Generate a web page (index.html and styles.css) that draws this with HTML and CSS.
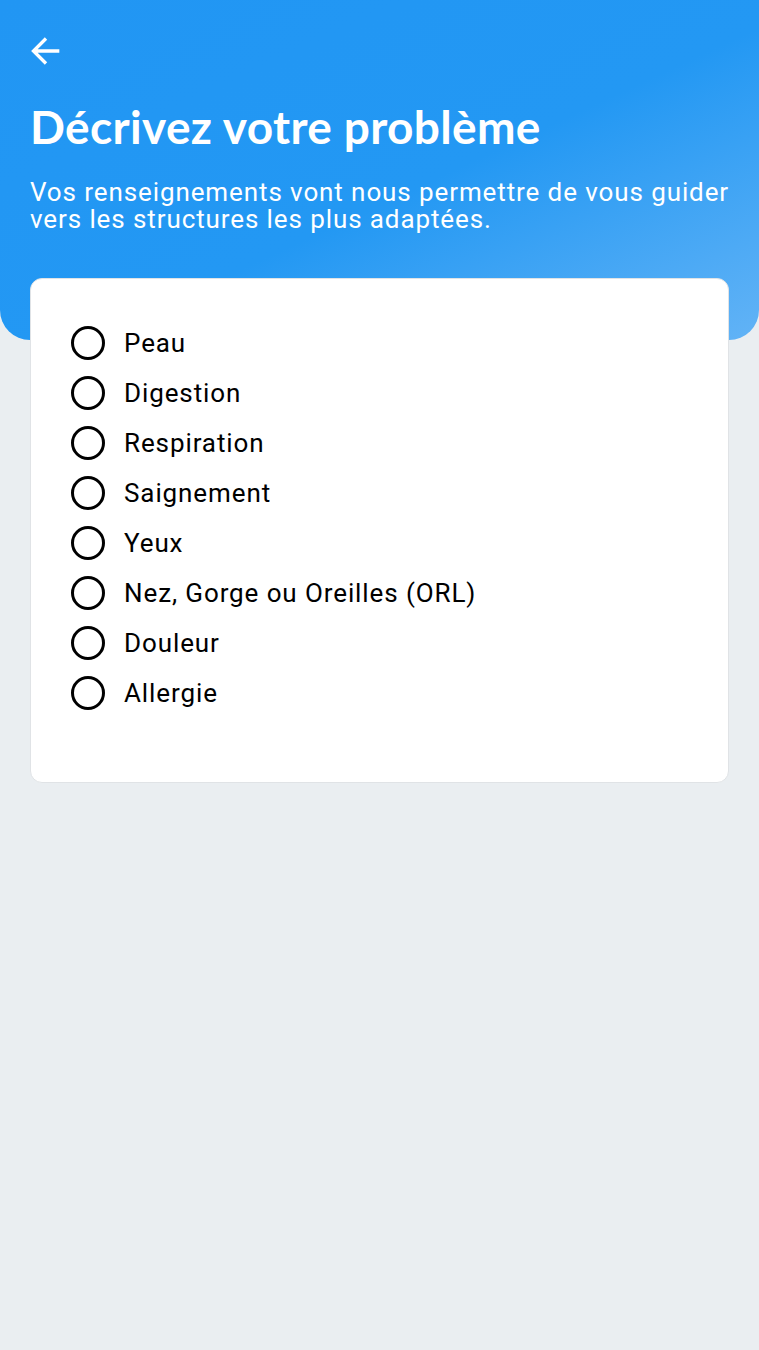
FILE: index.html
```html
<!DOCTYPE html>
<html lang="fr">
  <head>
    <meta charset="UTF-8" />
    <meta name="viewport" content="width=device-width, initial-scale=1.0" />
    <title>Décrivez votre problème</title>
    <link rel="stylesheet" href="styles.css">
  </head>
  <body>
    <div class="header">
      <a href="#" class="back">
        <svg width="40" height="40" viewBox="0 0 24 24">
          <path d="M20 12H4.5M12 4.5L4.5 12l7.5 7.5" fill="none" stroke="white" stroke-width="2" />
        </svg>
      </a>
      <h1>Décrivez votre problème</h1>
      <p class="intro">Vos renseignements vont nous permettre de vous guider vers les structures les plus adaptées.</p>
    </div>

    <div class="card">
      <label class="option"><input type="radio" name="probleme" /><span class="circle"></span>Peau</label>
      <label class="option"><input type="radio" name="probleme" /><span class="circle"></span>Digestion</label>
      <label class="option"><input type="radio" name="probleme" /><span class="circle"></span>Respiration</label>
      <label class="option"><input type="radio" name="probleme" /><span class="circle"></span>Saignement</label>
      <label class="option"><input type="radio" name="probleme" /><span class="circle"></span>Yeux</label>
      <label class="option"><input type="radio" name="probleme" /><span class="circle"></span>Nez, Gorge ou Oreilles (ORL)</label>
      <label class="option"><input type="radio" name="probleme" /><span class="circle"></span>Douleur</label>
      <label class="option"><input type="radio" name="probleme" /><span class="circle"></span>Allergie</label>
    </div>
  </body>
</html>
```

FILE: styles.css
```css
body {
  margin: 0;
  font-family: Roboto, "Liberation Sans", sans-serif;
  background-color: #eaeef1;
  color: black;
}

.header {
  background: linear-gradient(155deg, #2196f3 0%, #2398f3 55%, #62b3f6 100%);
  border-radius: 0 0 30px 30px;
  padding: 31px 16px 107px 30px;
  color: white;
}

.back {
  display: block;
  width: 40px;
  height: 40px;
  margin-left: -4px;
}

.back svg {
  display: block;
}

h1 {
  font-family: Lato, "Open Sans", sans-serif;
  font-weight: 700;
  font-size: 46px;
  letter-spacing: 0.35px;
  margin: 26px 0 0 0;
  line-height: 60px;
}

.intro {
  font-size: 26px;
  letter-spacing: 0.9px;
  line-height: 27px;
  margin: 22px 0 0 0;
}

.card {
  background-color: white;
  border: 1px solid #e0e3e6;
  border-radius: 12px;
  margin: -62px 30px 0 30px;
  padding: 39px 40px 64px 40px;
  display: flex;
  flex-direction: column;
}

.option {
  display: flex;
  align-items: center;
  height: 50px;
  font-size: 26px;
  letter-spacing: 0.9px;
  cursor: pointer;
}

.option input {
  display: none;
}

.circle {
  width: 28px;
  height: 28px;
  border: 3px solid black;
  border-radius: 50%;
  margin-right: 19px;
  box-sizing: content-box;
}
```
